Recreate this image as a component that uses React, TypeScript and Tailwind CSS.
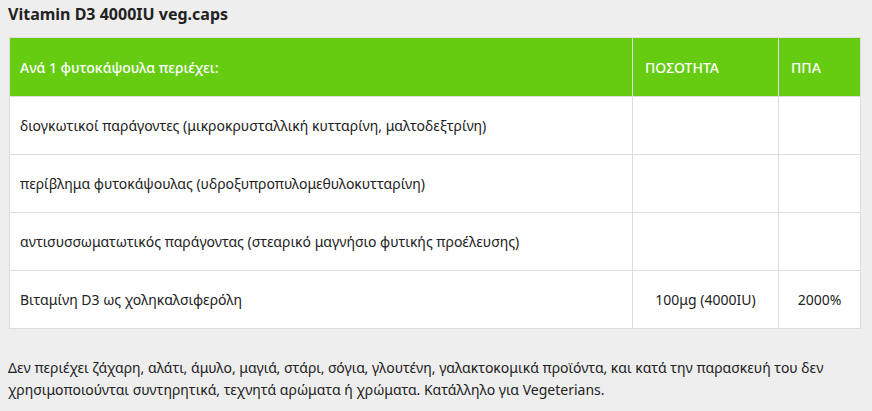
const rows = [
  { name: 'διογκωτικοί παράγοντες (μικροκρυσταλλική κυτταρίνη, μαλτοδεξτρίνη)', qty: '', ria: '' },
  { name: 'περίβλημα φυτοκάψουλας (υδροξυπροπυλομεθυλοκυτταρίνη)', qty: '', ria: '' },
  { name: 'αντισυσσωματωτικός παράγοντας (στεαρικό μαγνήσιο φυτικής προέλευσης)', qty: '', ria: '' },
  { name: 'Βιταμίνη D3 ως χοληκαλσιφερόλη', qty: '100μg (4000IU)', ria: '2000%' },
];

export default function App() {
  return (
    <div className="min-h-[411px] bg-[#eeeeee] px-[8px] pt-[4px] text-[#222222] font-['Noto_Sans',sans-serif]">
      <h3 className="text-[16px] font-bold leading-[20px]">Vitamin D3 4000IU veg.caps</h3>
      <div className="mt-[13px] pl-[1px] pr-[3px]">
        <table className="w-full border-collapse text-[14px]">
          <thead>
            <tr className="h-[59px] bg-[#66cc11] text-white">
              <th className="border border-[#dddddd] px-[10px] text-left font-medium">Ανά 1 φυτοκάψουλα περιέχει:</th>
              <th className="w-[146px] border border-[#dddddd] px-[12px] text-left font-medium">ΠΟΣΟΤΗΤΑ</th>
              <th className="w-[82px] border border-[#dddddd] px-[12px] text-left font-medium">ΠΠΑ</th>
            </tr>
          </thead>
          <tbody className="bg-white">
            {rows.map((r) => (
              <tr key={r.name} className="h-[58px]">
                <td className="border border-[#dddddd] px-[10px]">{r.name}</td>
                <td className="border border-[#dddddd] px-[10px] text-center">{r.qty}</td>
                <td className="border border-[#dddddd] px-[10px] text-center">{r.ria}</td>
              </tr>
            ))}
          </tbody>
        </table>
      </div>
      <p className="mt-[28px] text-[14px] leading-[22px]">
        Δεν περιέχει ζάχαρη, αλάτι, άμυλο, μαγιά, στάρι, σόγια, γλουτένη, γαλακτοκομικά προϊόντα, και κατά την παρασκευή του δεν χρησιμοποιούνται συντηρητικά, τεχνητά αρώματα ή χρώματα. Κατάλληλο για Vegeterians.
      </p>
    </div>
  );
}
